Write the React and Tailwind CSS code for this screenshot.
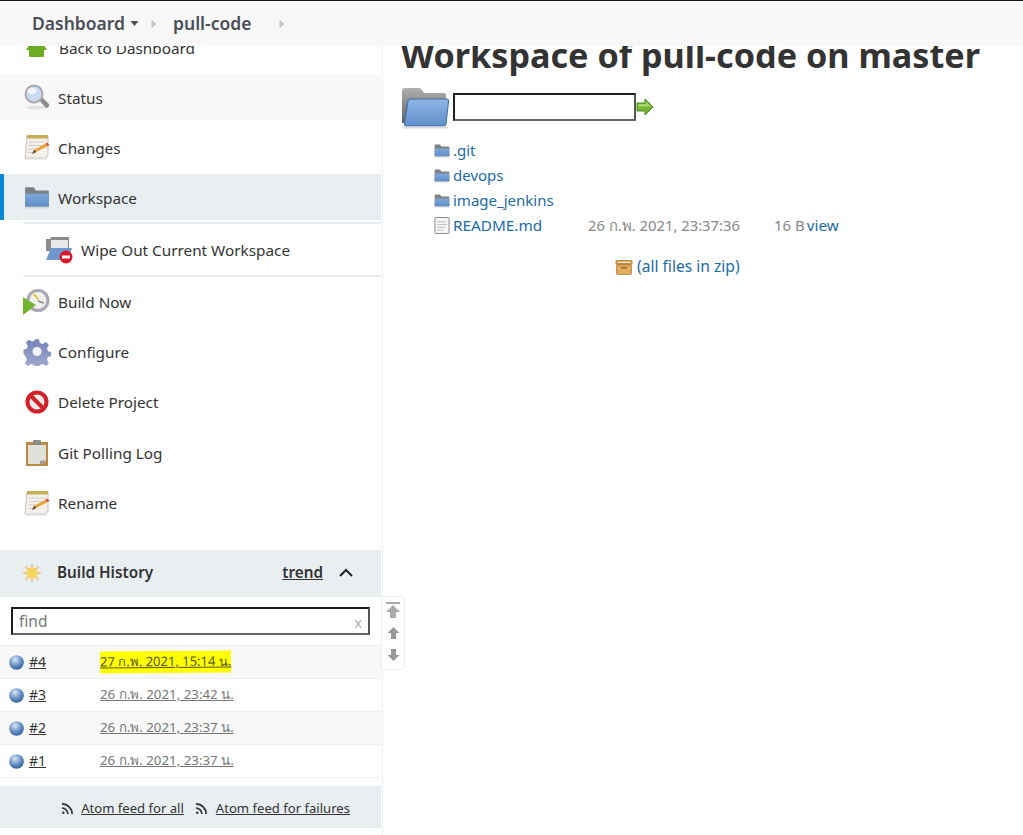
import React from 'react'

const FolderIcon = ({ className }) => (
  <svg viewBox="0 0 48 42" className={className}>
    <defs>
      <linearGradient id="fb" x1="0" y1="0" x2="0" y2="1">
        <stop offset="0" stopColor="#8fb5e4" />
        <stop offset="1" stopColor="#5f8fcc" />
      </linearGradient>
      <linearGradient id="fg" x1="0" y1="0" x2="0" y2="1">
        <stop offset="0" stopColor="#b0b0b0" />
        <stop offset="1" stopColor="#5f5f5f" />
      </linearGradient>
    </defs>
    <path d="M1 4q0-3 3-3h14q2 0 3 2l2 3h20q2 0 2 2v28H1z" fill="url(#fg)" />
    <path d="M9 12h37q2 0 1.600 2L45 37q0 2-2 2H5q-2 0-1.600-2L7 14q0-2 2-2z" fill="url(#fb)" stroke="#3c6ca8" strokeWidth="1" />
    <rect x="1" y="39.500" width="46" height="2" fill="#dcdcdc" />
  </svg>
)

const SmallFolder = ({ className }) => (
  <svg viewBox="0 0 24 22" className={className}>
    <defs>
      <linearGradient id="sf" x1="0" y1="0" x2="0" y2="1">
        <stop offset="0" stopColor="#7fa8dc" />
        <stop offset="1" stopColor="#5e8cc8" />
      </linearGradient>
    </defs>
    <path d="M1 3q0-1 1-1h7l2 3h11q1 0 1 1v14H1z" fill="#808080" />
    <path d="M1 8h22v11q0 1-1 1H2q-1 0-1-1z" fill="url(#sf)" />
    <rect x="1" y="20" width="22" height="1.500" fill="#d5d5d5" />
  </svg>
)

const SearchIcon = () => (
  <svg viewBox="0 0 26 26" className="w-[26px] h-[26px]">
    <ellipse cx="12" cy="23.500" rx="10" ry="2" fill="#e3e3e3" />
    <path d="M15 16l3-3 7 7q1 2-1 3.500-2 1-3-.5z" fill="#8c8c8c" />
    <circle cx="10" cy="10" r="8.500" fill="#c9dcf2" stroke="#aaa" strokeWidth="2" />
    <ellipse cx="8" cy="7" rx="4.500" ry="3" fill="#f1f6fc" />
  </svg>
)

const NotepadIcon = () => (
  <svg viewBox="0 0 26 26" className="w-[26px] h-[26px]">
    <path d="M3 2h21v19q-1 3-4 3H1z" fill="#f3f1ea" stroke="#c4c4c4" />
    <rect x="3" y="1" width="21" height="3.500" fill="#c8ad55" />
    <path d="M5 8h16M5 11.500h14M4.500 15h9M4 18.500h5" stroke="#cfcfcf" strokeWidth="1.100" />
    <path d="M8 20l2-4 11-6 3 2-12 6z" fill="#e5a33a" />
    <path d="M21 10l3 2 1.500-1.500-2.500-2z" fill="#d9533a" />
    <path d="M8 20l2-4 2.500 2z" fill="#5b4a32" />
    <rect x="1" y="24.500" width="22" height="1.200" fill="#e2e2e2" />
  </svg>
)

const WipeIcon = () => (
  <svg viewBox="0 0 28 28" className="w-[28px] h-[28px]">
    <path d="M1 3h4l1-2h18v14H1v8z" fill="#8b8b8b" />
    <path d="M6 4h17v12H6z" fill="#e8e8e8" />
    <path d="M6 12h21l-4 12H1z" fill="#6f97cd" />
    <circle cx="21" cy="21" r="6.500" fill="#d9172a" />
    <rect x="17" y="19.500" width="8" height="3" fill="#fff" />
  </svg>
)

const BuildIcon = () => (
  <svg viewBox="0 0 28 28" className="w-[28px] h-[28px]">
    <circle cx="15" cy="12.500" r="11.500" fill="#a9a5b8" />
    <circle cx="15" cy="12.500" r="8.500" fill="#f0f0ee" />
    <path d="M15 13L9 7l3-2.500 5 7z" fill="#e8c95b" stroke="#fff" strokeWidth="0.800" />
    <path d="M15 13l6 2" stroke="#888" strokeWidth="1.500" />
    <path d="M0 9l13 8L0 27z" fill="#71b52c" />
  </svg>
)

const GearIcon = () => (
  <svg viewBox="0 0 28 28" className="w-[28px] h-[28px]">
    <defs>
      <linearGradient id="gear" x1="0" y1="0" x2="0" y2="1">
        <stop offset="0" stopColor="#7584b8" />
        <stop offset="1" stopColor="#a4aad0" />
      </linearGradient>
    </defs>
    <path
      d="M12 1h4l1 4 3 1 3.500-2 3 3-2 3.500 1 3 3.500 1v4l-3.500 1-1 3 2 3.500-3 3-3.500-2-3 1-1 3.500h-4l-1-3.500-3-1-3.500 2-3-3 2-3.500-1-3L0 16v-4l3.500-1 1-3-2-3.500 3-3 3.500 2 3-1z"
      transform="scale(.96) translate(.500 .200)"
      fill="url(#gear)"
    />
    <circle cx="14" cy="13.500" r="4.500" fill="#f4f4f8" />
  </svg>
)

const NoIcon = () => (
  <svg viewBox="0 0 24 24" className="w-[24px] h-[24px]">
    <circle cx="12" cy="12" r="9.500" fill="#f3eaea" stroke="#d22027" strokeWidth="4" />
    <path d="M5 5l14 14" stroke="#d22027" strokeWidth="4" />
  </svg>
)

const ClipboardIcon = () => (
  <svg viewBox="0 0 24 27" className="w-[24px] h-[27px]">
    <rect x="1" y="2" width="22" height="24" fill="#b98a45" />
    <path d="M3 5h18v16l-4 3H3z" fill="#e1e1dc" />
    <path d="M21 20l-6 1v3h2z" fill="#9a9a9a" />
    <rect x="8" y="0" width="8" height="5" rx="1" fill="#8d8d86" />
  </svg>
)

const BallIcon = () => (
  <svg viewBox="0 0 16 16" className="w-[15px] h-[15px] shrink-0 translate-y-[1px]">
    <defs>
      <radialGradient id="ball" cx="0.4" cy="0.3" r="0.8">
        <stop offset="0" stopColor="#dbe7f5" />
        <stop offset="0.5" stopColor="#6c93c8" />
        <stop offset="1" stopColor="#234f8f" />
      </radialGradient>
    </defs>
    <circle cx="8" cy="8" r="7.800" fill="url(#ball)" />
  </svg>
)

const RssIcon = () => (
  <svg viewBox="0 0 14 14" className="w-[13px] h-[13px] shrink-0" fill="none" stroke="#333" strokeWidth="1.800">
    <circle cx="2.500" cy="11.500" r="1.300" fill="#333" stroke="none" />
    <path d="M1 6.500a6.500 6.500 0 0 1 6.500 6.500M1 2a11 11 0 0 1 11 11" />
  </svg>
)

const Caret = () => (
  <svg viewBox="0 0 6 10" className="w-[6px] h-[10px]">
    <path d="M0.500 0.500L5.500 5L0.500 9.500z" fill="#c4c8cc" />
  </svg>
)

const menu = [
  { label: 'Status', icon: <SearchIcon />, className: 'bg-[#f8f8f8]', text: 'pt-[2px]' },
  { label: 'Changes', icon: <NotepadIcon />, text: 'pt-[2px]' },
  { label: 'Workspace', icon: <SmallFolder className="w-[26px] h-[24px]" />, className: 'bg-[#e9eef1]', active: true, text: 'pt-[2px]' },
]

const menu2 = [
  { label: 'Build Now', icon: <BuildIcon /> },
  { label: 'Configure', icon: <GearIcon /> },
  { label: 'Delete Project', icon: <NoIcon /> },
  { label: 'Git Polling Log', icon: <ClipboardIcon />, className: 'mt-[1px]' },
  { label: 'Rename', icon: <NotepadIcon /> },
]

const MenuRow = ({ item }) => (
  <div className={`relative h-[46px] flex items-center pl-[23px] ${item.className || ''}`}>
    {item.active && <div className="absolute left-0 top-0 bottom-0 w-[4px] bg-[#0b87d6]" />}
    <div className="w-[35px] flex justify-center shrink-0">
      <div className="w-[28px] flex justify-center -ml-[8px]">{item.icon}</div>
    </div>
    <span className={item.text || ''}>{item.label}</span>
  </div>
)

const builds = [
  { id: '#4', date: '27 ก.พ. 2021, 15:14 น.', mark: true, bg: 'bg-[#f8f8f8]' },
  { id: '#3', date: '26 ก.พ. 2021, 23:42 น.' },
  { id: '#2', date: '26 ก.พ. 2021, 23:37 น.', bg: 'bg-[#f8f8f8]' },
  { id: '#1', date: '26 ก.พ. 2021, 23:37 น.' },
]

const files = [
  { name: '.git' },
  { name: 'devops' },
  { name: 'image_jenkins' },
]

export default function App() {
  return (
    <div className="relative w-[1023px] h-[835px] overflow-hidden bg-white flex text-[#333] text-[15.300px] font-['Noto_Sans','Liberation_Sans',sans-serif]">
      {/* breadcrumb lies over the scrolled page */}
      <div className="absolute top-0 left-0 right-0 h-[46px] z-10 bg-[#f8f8f8] border-t border-[#1a1a1a] flex items-center pl-[32px] text-[#4a4f57] text-[17.500px] font-semibold">
        <span>Dashboard</span>
        <svg viewBox="0 0 8 5" className="w-[9px] h-[5px] ml-[5px] mr-[12px]">
          <path d="M0 0h8L4 5z" fill="#4a4f57" />
        </svg>
        <Caret />
        <span className="ml-[16px]">pull-code</span>
        <div className="ml-[28px] flex"><Caret /></div>
      </div>

      <aside className="w-[383px] shrink-0 border-r border-[#e9eef1] pt-[24px] flex flex-col">
        <div className="w-[381px]">
          <div className="h-[46px] flex items-center pl-[26px] mb-[4px]">
            <svg viewBox="0 0 21 24" className="w-[21px] h-[24px] shrink-0 -mt-[4px]">
              <path d="M10.500 0L21 17h-3v6q0 1-1 1H4q-1 0-1-1v-6H0z" fill="#6cab22" />
            </svg>
            <span className="ml-[12px] pt-[2px]">Back to Dashboard</span>
          </div>
          <div className="flex flex-col gap-[4px]">
            {menu.map((item) => <MenuRow key={item.label} item={item} />)}
          </div>
          <div className="ml-[23px] mt-[2px] border-t-2 border-[#e9eef1] h-[53px] flex items-center pl-[22px]">
            <WipeIcon />
            <span className="ml-[8px] pt-[1px]">Wipe Out Current Workspace</span>
          </div>
          <div className="ml-[23px] border-t-2 border-[#e9eef1]" />
          <div className="flex flex-col gap-[4px] mt-[2px]">
            {menu2.map((item) => <MenuRow key={item.label} item={item} />)}
          </div>

          <div className="mt-[24px] h-[47px] bg-[#e9eef1] flex items-center pl-[23px] pb-[2px] font-semibold">
            <svg viewBox="0 0 18 18" className="w-[18px] h-[18px] shrink-0">
              <circle cx="9" cy="9" r="5.500" fill="#f7d65a" />
              <path d="M9 0v4M9 14v4M0 9h4M14 9h4M2.500 2.500l3 3M12.500 12.500l3 3M15.500 2.500l-3 3M5.500 12.500l-3 3" stroke="#f7c48f" strokeWidth="2" />
            </svg>
            <span className="ml-[16px]">Build History</span>
            <a className="ml-auto underline">trend</a>
            <svg viewBox="0 0 14 9" className="w-[14px] h-[9px] ml-[16px] mr-[28px]" fill="none" stroke="#222" strokeWidth="2">
              <path d="M1 8l6-6 6 6" />
            </svg>
          </div>
          <div className="h-[48px] flex items-center pl-[11px] pr-[11px]">
            <div className="w-full h-[28px] border-2 border-t-[#1f1f1f] border-l-[#1f1f1f] border-r-[#555] border-b-[#666] flex items-center justify-between px-[6px] pt-[2px] text-[15.500px] text-[#777]">
              <span>find</span>
              <span className="text-[14px] text-[#aaa]">x</span>
            </div>
          </div>
          <div className="border-t border-[#eceff1]">
            {builds.map((b) => (
              <div key={b.id} className={`h-[33px] border-b border-[#eceff1] flex items-center pl-[9px] pb-[1px] text-[14px] ${b.bg || ''}`}>
                <BallIcon />
                <a className="ml-[5px] w-[71px] underline">{b.id}</a>
                <a className={`underline ${b.mark ? 'text-[13px] bg-[#ffff00] text-[#56560f] py-[1px] -rotate-[0.5deg]' : 'text-[13.300px] text-[#777]'}`}>{b.date}</a>
              </div>
            ))}
          </div>
          <div className="mt-[8px] h-[42px] bg-[#e9eef1] flex items-center justify-end pr-[31px] pt-[3px] text-[13.100px]">
            <RssIcon />
            <a className="ml-[7px] underline">Atom feed for all</a>
            <div className="ml-[11px]"><RssIcon /></div>
            <a className="ml-[8px] underline">Atom feed for failures</a>
          </div>
        </div>
      </aside>

      {/* pagination widget hanging off the sidebar edge */}
      <div className="absolute left-[381px] top-[596px] w-[24px] h-[74px] bg-white border border-[#e9eef1] rounded-r-[4px] flex flex-col items-center pt-[5px]">
        <svg viewBox="0 0 14 16" className="w-[14px] h-[16px]"><path d="M0 0h14v2H0zM7 3l7 7H10v6H4v-6H0z" fill="#aaa" /></svg>
        <svg viewBox="0 0 14 14" className="w-[13px] h-[12px] mt-[9px]"><path d="M7 0l7 7H10v7H4V7H0z" fill="#999" /></svg>
        <svg viewBox="0 0 14 14" className="w-[13px] h-[12px] mt-[10px]"><path d="M7 14L0 7h4V0h6v7h4z" fill="#999" /></svg>
      </div>

      <main className="flex-1 pl-[18px] pt-[33px]">
        <h1 className="text-[34.200px] leading-[44px] font-bold text-[#333] whitespace-nowrap">Workspace of pull-code on master</h1>
        <div className="flex items-center mt-[9px] h-[43px]">
          <FolderIcon className="w-[48px] h-[42px] shrink-0" />
          <div className="ml-[4px] -mt-[2px] w-[183px] h-[28px] bg-white border-2 border-t-[#1f1f1f] border-l-[#1f1f1f] border-r-[#555] border-b-[#666]" />
          <svg viewBox="0 0 18 18" className="w-[18px] h-[18px] -mt-[1px]">
            <path d="M1 5h8V1l8 8-8 8v-4H1z" fill="#74b534" stroke="#4d8a1c" strokeWidth="1" />
            <path d="M2 6h8V3.500L15 8.500H2z" fill="#a6d66e" />
          </svg>
        </div>
        <div className="mt-[9px] pl-[33px] text-[#1b6ba7]">
          {files.map((f) => (
            <div key={f.name} className="h-[25px] flex items-center">
              <SmallFolder className="w-[16px] h-[15px] shrink-0" />
              <a className="ml-[3px] text-[15px]">{f.name}</a>
            </div>
          ))}
          <div className="h-[25px] flex items-center">
            <svg viewBox="0 0 16 18" className="w-[16px] h-[17px] shrink-0">
              <rect x="0.500" y="0.500" width="15" height="17" rx="1" fill="#f4f4f4" stroke="#888" />
              <path d="M3 5h9M3 8h10M3 11h8M3 14h6" stroke="#bbb" />
            </svg>
            <a className="ml-[3px] w-[135px]">README.md</a>
            <span className="text-[#888] w-[186px] text-[14.800px]">26 ก.พ. 2021, 23:37:36</span>
            <span className="text-[#888] text-[15px]">16 B</span>
            <a className="ml-[2px]">view</a>
          </div>
        </div>
        <div className="mt-[16px] pl-[214px] h-[25px] flex items-center text-[#1b6ba7]">
          <svg viewBox="0 0 18 16" className="w-[18px] h-[16px] shrink-0">
            <rect x="0.500" y="1" width="17" height="5" rx="1.500" fill="#c08a3c" />
            <rect x="1.500" y="6" width="15" height="9.500" rx="1" fill="#e2ad63" stroke="#b57f33" strokeWidth="0.800" />
            <rect x="2" y="2.500" width="14" height="1.500" fill="#f3e4c5" />
            <rect x="6" y="8" width="6" height="1.500" fill="#96692b" />
          </svg>
          <a className="ml-[4px] text-[15.600px]">(all files in zip)</a>
        </div>
      </main>
    </div>
  )
}
